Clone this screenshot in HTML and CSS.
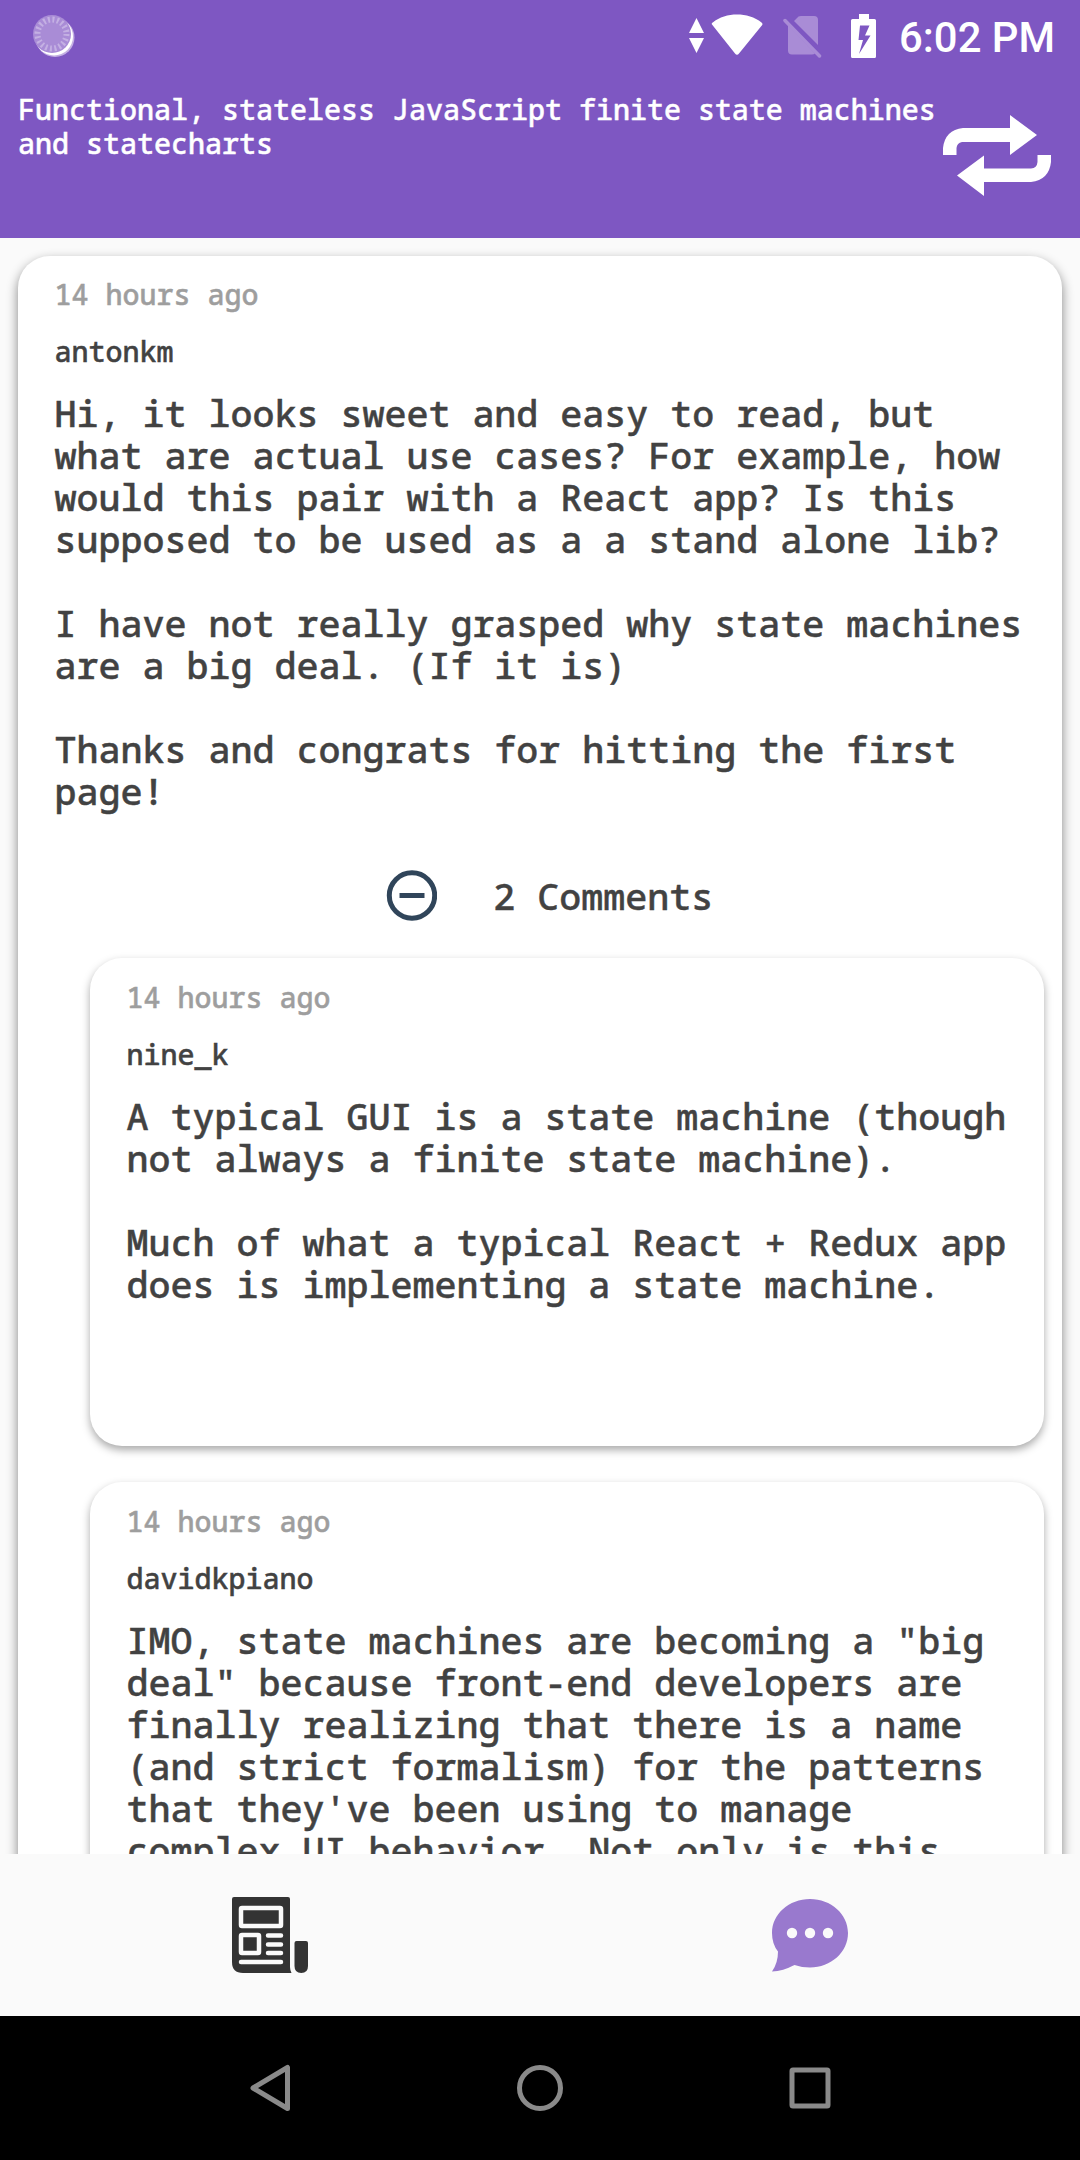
FILE: index.html
```html
<!DOCTYPE html>
<html lang="en">
<head>
<meta charset="utf-8">
<title>Comments</title>
<link rel="stylesheet" href="styles.css">
</head>
<body>
<div class="screen">
  <header class="top">
    <div class="status">
      <svg class="spinner" width="44" height="46" viewBox="0 0 44 46">
        <circle cx="22" cy="23.500" r="19.500" fill="#c4b0e3"/>
        <circle cx="21" cy="22.500" r="19" fill="#fff"/>
        <circle cx="19" cy="20" r="19" fill="#a98cd6"/>
        <circle cx="19" cy="20" r="14.500" fill="none" stroke="#c4b0e3" stroke-width="6" stroke-dasharray="2 2.555"/>
      </svg>
      <div class="indicators">
        <svg class="wifi" width="76" height="44" viewBox="0 0 76 44">
          <path fill="#fff" d="M8.500 4L16 19H1zM1 24h15L8.500 39zM24 10.500q-.8-1.300.8-2.100C38-2 60-2 73.500 8.500q1.500.9.700 2.400L51 39.500q-2 2.500-4 0z"/>
        </svg>
        <svg class="sim" width="40" height="44" viewBox="0 0 40 44">
          <path fill="#a98cd6" d="M12 7l4.500-4.500q1-.5 2.500-.5H32q4 0 4 4v25zM6 11l27 28.500q-1 1-3 1H10q-4 0-4-4z"/>
          <path d="M3 6.500l34.500 35.500" stroke="#a98cd6" stroke-width="3.500" stroke-linecap="round"/>
        </svg>
        <svg class="battery" width="26" height="44" viewBox="0 0 26 44">
          <path fill="#fff" fill-rule="evenodd" d="M8 0h10v5h5.500q1.500 0 1.500 1.500v36q0 1.500-1.500 1.500h-22Q0 44 0 42.500v-36Q0 5 1.500 5H8zM9 11.500L7.500 26h4.500L8 40l11.500-18.500H14L18.500 11.500z"/>
        </svg>
        <span class="clock">6:02 PM</span>
      </div>
    </div>
    <div class="bar">
      <h1 class="title">Functional, stateless JavaScript finite state machines and statecharts</h1>
      <svg class="repeat" width="108" height="81" viewBox="0 0 108 81">
        <path fill="#fff" d="M0 40V33Q2 15 20 13H67V0L94 20 67 40V27H19Q14 28 13.500 33V40zM108 40V47Q106 65 88 67H41V81L14 60.500 41 40.500V53.500H88Q94 53 94.500 47V40z"/>
      </svg>
    </div>
  </header>
  <main class="feed">
    <article class="card root">
      <div class="meta">14 hours ago</div>
      <div class="author">antonkm</div>
      <div class="text">Hi, it looks sweet and easy to read, but
what are actual use cases? For example, how
would this pair with a React app? Is this
supposed to be used as a a stand alone lib?

I have not really grasped why state machines
are a big deal. (If it is)

Thanks and congrats for hitting the first
page!</div>
      <div class="toggle">
        <svg width="52" height="52" viewBox="0 0 52 52"><circle cx="27" cy="25.500" r="22.700" fill="none" stroke="#30455a" stroke-width="5"/><path d="M14.500 25.500h25" stroke="#30455a" stroke-width="5"/></svg>
        <span>2 Comments</span>
      </div>
      <div class="replies">
        <article class="card reply">
          <div class="meta">14 hours ago</div>
          <div class="author">nine_k</div>
          <div class="text">A typical GUI is a state machine (though
not always a finite state machine).

Much of what a typical React + Redux app
does is implementing a state machine.</div>
        </article>
        <article class="card reply">
          <div class="meta">14 hours ago</div>
          <div class="author">davidkpiano</div>
          <div class="text">IMO, state machines are becoming a "big
deal" because front-end developers are
finally realizing that there is a name
(and strict formalism) for the patterns
that they've been using to manage
complex UI behavior. Not only is this</div>
        </article>
      </div>
    </article>
  </main>
  <nav class="tabs">
    <div class="tab">
      <svg width="78" height="78" viewBox="0 0 78 78">
        <path fill="#333" d="M1 3q0-2 2-2h54q2 0 2 2v68q0 3 1.500 6H12Q1 77 1 66zM63.500 47q0-2 2-2h9.500q2 0 2 2v23q0 7-6.750 7t-6.750-7z"/>
        <g fill="none" stroke="#fafafa" stroke-width="4.500"><rect x="10" y="12" width="40" height="18" rx="1"/><rect x="10" y="39" width="18" height="18" rx="1"/><path stroke-linecap="round" d="M37 39.500h13M37 48.500h13M37 57h13M10 66h40"/></g>
      </svg>
    </div>
    <div class="tab">
      <svg width="78" height="78" viewBox="0 0 78 78">
        <path fill="#9979ce" d="M39 3C60 3 77 18 77 37S60 71.500 39 71.500q-8 0-15.500-2.500Q12 75 1 75.500 7 67 7 55.500 1 48 1 37C1 18 18 3 39 3z"/>
        <g fill="#fafafa"><circle cx="21" cy="37" r="5.200"/><circle cx="39" cy="37" r="5.200"/><circle cx="57" cy="37" r="5.200"/></g>
      </svg>
    </div>
  </nav>
  <footer class="navbar">
    <svg width="50" height="50" viewBox="0 0 50 50"><path d="M42.500 4.500v41L8 25z"/></svg>
    <svg width="50" height="50" viewBox="0 0 50 50"><circle cx="25" cy="25" r="20.500"/></svg>
    <svg width="50" height="50" viewBox="0 0 50 50"><rect x="7" y="7" width="36" height="36" rx="1"/></svg>
  </footer>
</div>
</body>
</html>
```
FILE: styles.css
```css
* { box-sizing: border-box; }
body { margin: 0; background: #fafafa; font-family: "Droid Sans Mono", "Noto Sans Mono", "DejaVu Sans Mono", monospace; color: #424242; }
.screen { width: 1080px; height: 2160px; display: flex; flex-direction: column; overflow: hidden; }
.top { height: 238px; background: #7e57c2; color: #fff; flex: none; }
.status { height: 72px; padding: 14px 25px 0 33px; display: flex; justify-content: space-between; align-items: flex-start; }
.indicators { display: flex; }
.wifi { margin-right: 18px; }
.sim { margin-right: 29px; }
.battery { margin-right: 22px; }
.clock { font: 500 41.800px/48px Roboto, sans-serif; white-space: nowrap; }
.bar { display: flex; justify-content: space-between; padding: 20px 29px 0 18px; }
.title { margin: 0; width: 925px; flex: none; font-size: 28.330px; line-height: 34px; font-weight: 500; -webkit-text-stroke: .45px currentColor; }
.repeat { flex: none; margin-top: 23px; }
.feed { flex: 1; min-height: 0; overflow: hidden; padding: 18px 18px 0; }
.card { background: #fff; border-radius: 32px; box-shadow: 0 4px 9px rgba(0, 0, 0, .34); padding: 22px 18px 0 36.500px; font-weight: 500; }
.root { height: 1800px; padding-top: 21px; box-shadow: 0 5px 12px rgba(0, 0, 0, .48); }
.meta, .author, .text, .toggle { -webkit-text-stroke: .45px currentColor; }
.meta, .author { font-size: 28.330px; line-height: 34px; }
.meta { color: #9e9e9e; margin-bottom: 23px; }
.author { margin-bottom: 24px; }
.text { font-size: 36.670px; line-height: 42px; white-space: pre; }
.toggle { display: flex; align-items: center; justify-content: center; gap: 56px; margin: 58px 0 36px; height: 52px; font-size: 36.670px; }
.replies { padding-left: 35.500px; }
.reply { height: 488px; margin-bottom: 36px; }
.tabs { flex: none; height: 162px; display: flex; background: #fafafa; }
.tab { flex: 1; display: flex; align-items: center; justify-content: center; }
.navbar { flex: none; height: 144px; background: #000; display: flex; justify-content: space-between; align-items: center; padding: 0 245px; }
.navbar svg { fill: none; stroke: #8a8a8a; stroke-width: 5; stroke-linejoin: round; }
```
